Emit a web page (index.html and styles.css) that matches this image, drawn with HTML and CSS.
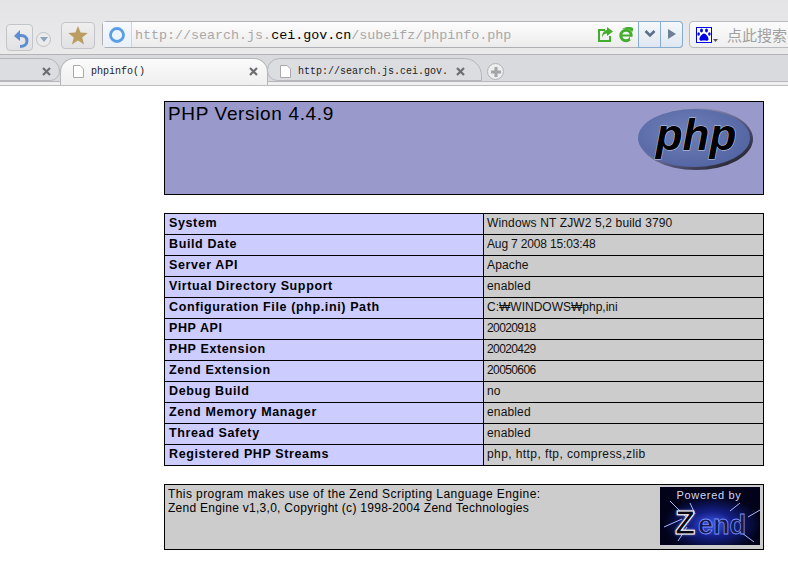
FILE: index.html
```html
<!DOCTYPE html>
<html lang="en">
<head>
<meta charset="utf-8">
<title>phpinfo()</title>
<link rel="stylesheet" href="styles.css">
</head>
<body>
<header class="toolbar">
  <button class="tool back">
    <svg width="22" height="22" viewBox="0 0 22 22"><path d="M5 9l6-6v11z" fill="#5d8fd0"/><path d="M10 8.500c5-.5 8 1.500 8 5.500 0 3.500-3 5.500-7 5.500" fill="none" stroke="#5d8fd0" stroke-width="3"/></svg>
  </button>
  <span class="round-drop"><svg width="8" height="5" viewBox="0 0 8 5"><path d="M0 0h8L4 5z" fill="#8aa4c0"/></svg></span>
  <button class="tool star">
    <svg width="20" height="19" viewBox="0 0 20 19"><path d="M10 0l2.600 6.600 7.200.4-5.600 4.500 1.900 7L10 14.500 3.900 18.500l1.900-7L.2 7l7.200-.4z" fill="#bb9d62"/></svg>
  </button>
  <div class="address">
    <span class="site"><svg width="16" height="16" viewBox="0 0 16 16"><circle cx="8" cy="8" r="6.500" fill="#eaf5fd" stroke="#5a9ee8" stroke-width="2.800"/></svg></span>
    <span class="url">http://search.js.<b>cei.gov.cn</b>/subeifz/phpinfo.php</span>
    <svg class="share" width="16" height="15" viewBox="0 0 16 15"><path d="M1 2h7v2H3v9h9V9h2v6H1z" fill="#43ae2c"/><path d="M10 0l6 4.500L10 9V6.500C7.500 6.500 6 8 5 10.500 5 6 7 3.500 10 3z" fill="#43ae2c"/></svg>
    <svg class="ie" width="15" height="16" viewBox="0 0 15 16"><circle cx="7" cy="8.500" r="5.200" fill="none" stroke="#43ae2c" stroke-width="3"/><path d="M3 7.500h9v2H3z" fill="#43ae2c"/><path d="M11 9.800h3v3h-3z" fill="#f0f0f1"/><path d="M3 2c4-3 10-2 11-1 .5 1 0 3-1 4-1-2-5-4-10-3z" fill="#43ae2c"/></svg>
    <span class="addr-btn"><svg width="12" height="8" viewBox="0 0 12 8"><path d="M1.500 1L6 5.500 10.500 1" fill="none" stroke="#5b6f8c" stroke-width="2.600"/></svg></span>
    <span class="addr-btn last"><svg width="8" height="10" viewBox="0 0 8 10"><path d="M0 0l8 5-8 5z" fill="#6e7f95"/></svg></span>
  </div>
  <div class="search">
    <span class="paw"><svg width="14" height="14" viewBox="0 0 14 14"><g fill="#0000e6"><ellipse cx="4.500" cy="2.500" rx="1.400" ry="1.900"/><ellipse cx="9.500" cy="2.500" rx="1.400" ry="1.900"/><ellipse cx="1.600" cy="6" rx="1.300" ry="1.700"/><ellipse cx="12.400" cy="6" rx="1.300" ry="1.700"/><path d="M7 5.500c2 0 5 4 4.500 6.200-.5 1.500-3 .8-4.500.8s-4 .7-4.500-.8C2 9.500 5 5.500 7 5.500z"/></g></svg></span>
    <svg class="mini" width="5" height="3" viewBox="0 0 5 3"><path d="M0 0h5L2.500 3z" fill="#555"/></svg>
    <span class="placeholder">点此搜索</span>
  </div>
</header>

<nav class="tabs">
  <div class="tab cut"><svg class="x" width="9" height="9" viewBox="0 0 9 9"><path d="M1 1l7 7M8 1L1 8" stroke="#6d6e72" stroke-width="2.200"/></svg></div>
  <div class="tab active">
    <svg class="doc" width="11" height="13" viewBox="0 0 11 13"><path d="M.5.500h6.500l3.500 3.500v8.500H.5z" fill="#fff" stroke="#a9a9a9"/></svg>
    <span class="tab-title">phpinfo()</span>
    <svg class="x" width="9" height="9" viewBox="0 0 9 9"><path d="M1 1l7 7M8 1L1 8" stroke="#6d6e72" stroke-width="2.200"/></svg>
  </div>
  <div class="tab other">
    <svg class="doc" width="11" height="13" viewBox="0 0 11 13"><path d="M.5.500h6.500l3.500 3.500v8.500H.5z" fill="#fff" stroke="#a9a9a9"/></svg>
    <span class="tab-title">http://search.js.cei.gov.</span>
    <svg class="x" width="9" height="9" viewBox="0 0 9 9"><path d="M1 1l7 7M8 1L1 8" stroke="#6d6e72" stroke-width="2.200"/></svg>
  </div>
  <span class="new-tab"><svg width="10" height="10" viewBox="0 0 10 10"><path d="M3.500 0h3v3.500H10v3H6.500V10h-3V6.500H0v-3h3.500z" fill="#a2a4aa"/></svg></span>
</nav>

<main class="page">
  <section class="head">
    <h1>PHP Version 4.4.9</h1>
    <svg class="php-logo" width="120" height="64" viewBox="0 0 120 64">
      <defs>
        <radialGradient id="pg" cx="42%" cy="40%" r="65%"><stop offset="0" stop-color="#6f7fb8"/><stop offset="1" stop-color="#5264a2"/></radialGradient>
        <linearGradient id="ps" x1="0" y1="0" x2="1" y2="1"><stop offset="0" stop-color="#bfc4dc"/><stop offset=".6" stop-color="#55557c"/><stop offset="1" stop-color="#111"/></linearGradient>
      </defs>
      <ellipse cx="60" cy="32" rx="57" ry="31" fill="url(#ps)"/>
      <ellipse cx="58" cy="31" rx="56" ry="29" fill="url(#pg)"/>
      <text x="60" y="43" text-anchor="middle" class="php-word">php</text>
    </svg>
  </section>

  <table class="info">
    <tr><th>System</th><td class="lead">Windows NT ZJW2 5,2 build 3790</td></tr>
    <tr><th>Build Date</th><td class="date">Aug 7 2008 15:03:48</td></tr>
    <tr><th>Server API</th><td class="lead">Apache</td></tr>
    <tr><th>Virtual Directory Support</th><td class="lead">enabled</td></tr>
    <tr><th>Configuration File (php.ini) Path</th><td>C:₩WINDOWS₩php,ini</td></tr>
    <tr><th>PHP API</th><td class="num">20020918</td></tr>
    <tr><th>PHP Extension</th><td class="num">20020429</td></tr>
    <tr><th>Zend Extension</th><td class="num">20050606</td></tr>
    <tr><th>Debug Build</th><td class="lead">no</td></tr>
    <tr><th>Zend Memory Manager</th><td class="lead">enabled</td></tr>
    <tr><th>Thread Safety</th><td class="lead">enabled</td></tr>
    <tr><th>Registered PHP Streams</th><td class="wide">php, http, ftp, compress,zlib</td></tr>
  </table>

  <section class="foot">
    <p><span class="ln one">This program makes use of the Zend Scripting Language Engine:</span><span class="ln two">Zend Engine v1,3,0, Copyright (c) 1998-2004 Zend Technologies</span></p>
    <svg class="zend-logo" width="100" height="58" viewBox="0 0 100 58">
      <defs>
        <radialGradient id="zg" cx="52%" cy="64%" r="48%"><stop offset="0" stop-color="#3f57e8"/><stop offset=".45" stop-color="#141f86"/><stop offset="1" stop-color="#02031a"/></radialGradient>
        <filter id="zb" x="-20%" y="-20%" width="140%" height="140%"><feGaussianBlur stdDeviation="1.500"/></filter>
      </defs>
      <rect width="100" height="58" fill="#02030f"/>
      <rect width="100" height="58" fill="url(#zg)"/>
      <path d="M10 14l16 16M4 40l18-8M18 54l9-14M88 30l12-7M82 46l12 9M30 16l5 11M70 24l10-8" stroke="#a9b8ff" stroke-width="1" fill="none"/>
      <text x="15" y="47" class="zend-glow">Z</text>
      <text x="49" y="12" text-anchor="middle" class="zend-top">Powered by</text>
      <text x="15" y="47" class="zend-z">Z</text>
      <text x="38" y="47" class="zend-end">end</text>
    </svg>
  </section>
</main>
</body>
</html>
```
FILE: styles.css
```css
* { box-sizing: border-box; }
html, body { margin: 0; height: 100%; overflow: hidden; background: #fff; }
body { width: 788px; height: 563px; font-family: "Liberation Sans", Arial, sans-serif; color: #000; }
button { padding: 0; font: inherit; }

.toolbar {
  height: 55px;
  padding: 21px 0 0 6px;
  display: flex;
  align-items: flex-start;
  background: linear-gradient(#e4e4e6, #eaeaeb);
  border-bottom: 1px solid #b4b4b6;
}
.tool {
  flex: none;
  display: flex; align-items: center; justify-content: center;
  border: 1px solid #c2c4c8; border-radius: 4px;
  background: linear-gradient(#eeeeef, #e2e2e4);
}
.back { width: 27px; height: 27px; margin-top: 3px; }
.round-drop {
  flex: none;
  width: 15px; height: 15px; margin: 11px 0 0 3px;
  display: flex; align-items: center; justify-content: center;
  border: 1px solid #bfc1c5; border-radius: 50%; background: #ebebec;
}
.star { width: 34px; height: 27px; margin: 1px 0 0 10px; }
.address {
  flex: none;
  width: 581px; height: 27px; margin: 0 0 0 7px;
  display: flex; align-items: center;
  border: 1px solid #aeb0b3; border-radius: 4px;
  background: linear-gradient(#fdfdfd, #ececed);
}
.site {
  width: 29px; height: 25px; flex: none;
  display: flex; align-items: center; justify-content: center;
  border-right: 1px solid #c7d5e4;
  background: linear-gradient(#f6f9fd, #e8f0f9);
}
.url {
  flex: 1; padding: 2px 0 0 3px;
  font: 13.350px "Liberation Mono", monospace;
  color: #a8a8a8; white-space: nowrap;
}
.url b { font-weight: 400; color: #000; }
.share { margin-right: 6px; flex: none; }
.ie { margin-right: 4px; flex: none; }
.addr-btn {
  width: 23px; height: 27px; margin-top: -1px; flex: none;
  display: flex; align-items: center; justify-content: center;
  border: 1px solid #86acd0;
  background: linear-gradient(#f5f8fb, #dfe7f0);
}
.addr-btn.last { width: 22px; margin-right: -1px; border-left: 0; border-radius: 0 4px 4px 0; }
.search {
  flex: none; width: 120px; height: 27px; margin-left: 6px;
  display: flex; align-items: center; padding-left: 6px;
  border: 1px solid #b8babd; border-radius: 4px;
  background: linear-gradient(#fbfbfb, #efeff0);
  white-space: nowrap;
}
.paw {
  width: 16px; height: 16px; flex: none;
  display: flex; align-items: center; justify-content: center;
  border: 1px solid #0000e6; background: #fff;
}
.mini { margin: 11px 0 0 1px; flex: none; }
.placeholder { margin-left: 9px; font: 15px "Noto Sans CJK SC", sans-serif; color: #a0a0a0; }

.tabs {
  height: 31px;
  padding-top: 3px;
  display: flex;
  align-items: stretch;
  background: linear-gradient(#d9dadd 26px, #b8b8bb 26px, #b8b8bb 27px, #efeff0 27px);
  border-bottom: 1px solid #bdbdc0;
}
.tab {
  flex: none; width: 208px;
  display: flex; align-items: center;
  padding: 0 9px 0 12px;
  background: #dcdde0;
  border: 1px solid #b6b7ba;
  font: 10px "Liberation Mono", monospace;
  white-space: nowrap;
}
.tab.cut {
  width: 72px; margin: 0 0 4px -12px; padding: 3px 8px 0 12px;
  justify-content: flex-end;
  border-radius: 0 16px 12px 0;
}
.tab.active {
  padding-bottom: 1px;
  border-bottom: 0;
  border-radius: 14px 14px 0 0;
  background: linear-gradient(#fbfbfb, #efeff0);
}
.tab.other {
  width: 215px; margin: 0 0 4px -1px; padding: 3px 16px 0 12px;
  border-radius: 14px 20px 0 12px;
}
.doc { flex: none; margin-right: 7px; }
.tab-title { flex: 1; color: #222; }
.x { flex: none; }
.new-tab {
  flex: none;
  width: 17px; height: 17px; margin: 5px 0 0 5px;
  display: flex; align-items: center; justify-content: center;
  border: 1px solid #b2b3b6; border-radius: 50%; background: #eceded;
}

.page { margin: 15px 0 0 164px; width: 600px; font-size: 12px; }
.head {
  height: 94px; padding: 1px 7px 0 3px;
  display: flex; justify-content: space-between; align-items: flex-start;
  background: #9999cc; border: 1px solid #000;
}
.head h1 { margin: 0; font-size: 19px; line-height: 22px; font-weight: 400; letter-spacing: .65px; }
.php-logo { margin-top: 4px; flex: none; }
.php-word { font: italic 700 44px "Liberation Sans", sans-serif; fill: #000; stroke: #c9cfe8; stroke-width: 1px; paint-order: stroke; }

.info { width: 600px; margin-top: 18px; border-collapse: collapse; table-layout: fixed; }
.info th, .info td {
  height: 21px; padding: 0 4px 2px; border: 1px solid #000;
  text-align: left; vertical-align: middle; white-space: nowrap;
  font-size: 12px;
}
.info th { width: 319px; background: #ccccff; font-weight: 700; font-size: 12.500px; letter-spacing: .62px; }
.info td { padding-left: 3px; background: #cccccc; color: #111; }
.info td.lead { letter-spacing: .14px; }
.info td.date { letter-spacing: -.15px; }
.info td.num { letter-spacing: -.6px; }
.info td.wide { letter-spacing: .41px; }

.foot {
  height: 66px; margin-top: 18px; padding: 2px 3px 0 3px;
  display: flex; justify-content: space-between; align-items: flex-start;
  background: #cccccc; border: 1px solid #000;
}
.foot p { margin: 0; font-size: 12px; line-height: 14px; white-space: nowrap; }
.ln { display: block; }
.ln.one { letter-spacing: .42px; }
.ln.two { letter-spacing: .28px; }
.zend-logo { flex: none; }
.zend-top { font: 400 11px "Liberation Sans", sans-serif; fill: #d3d6f5; letter-spacing: .7px; }
.zend-glow { font: 700 33px "Liberation Sans", sans-serif; fill: #cdd6ff; filter: url(#zb); }
.zend-z { font: 700 33px "Liberation Sans", sans-serif; fill: #060612; stroke: #fff; stroke-width: 1px; }
.zend-end { font: 700 27px "Liberation Sans", sans-serif; fill: #141a4a; stroke: #7d90ff; stroke-width: .8px; }
```
